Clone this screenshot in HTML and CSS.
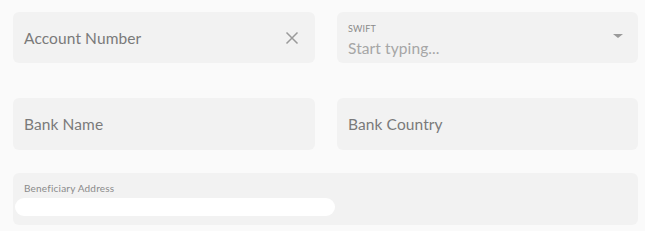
FILE: index.html
```html
<!DOCTYPE html>
<html>
<head>
<meta charset="utf-8">
<link rel="stylesheet" href="styles.css">
</head>
<body>
<div class="panel">
  <div class="row row-1">
    <div class="field">
      <span class="placeholder">Account Number</span>
      <svg class="clear" width="14" height="14" viewBox="0 0 14 14"><path d="M1.5 1.5L12.5 12.5M12.5 1.5L1.5 12.5" stroke="#9a9a9a" stroke-width="1.5" fill="none"/></svg>
    </div>
    <div class="field field-labelled">
      <div class="stack">
        <span class="label">SWIFT</span>
        <span class="placeholder light">Start typing...</span>
      </div>
      <span class="caret"></span>
    </div>
  </div>
  <div class="row row-2">
    <div class="field"><span class="placeholder">Bank Name</span></div>
    <div class="field"><span class="placeholder">Bank Country</span></div>
  </div>
  <div class="field field-wide">
    <span class="label small">Beneficiary Address</span>
    <div class="white-input"></div>
  </div>
</div>
</body>
</html>
```
FILE: styles.css
```css
html, body {
  margin: 0;
  padding: 0;
  background: #ffffff;
}
body {
  font-family: "Lato", "Noto Sans", sans-serif;
}
.panel {
  width: 645px;
  height: 231px;
  box-sizing: border-box;
  background: #fafafa;
  padding: 12px 7px 0 13px;
}
.row {
  display: grid;
  grid-template-columns: 302px 301px;
  column-gap: 22px;
}
.row-2 {
  margin-top: 35px;
}
.field {
  background: #f2f2f2;
  border-radius: 6px;
  height: 51px;
  box-sizing: border-box;
  padding: 0 11px;
  display: flex;
  align-items: center;
  justify-content: space-between;
}
.row-2 .field {
  height: 52px;
}
.placeholder {
  font-size: 15.5px;
  color: #7a7a7a;
  letter-spacing: 0.1px;
}
.placeholder.light {
  color: #a6a6a6;
}
.clear {
  margin-right: 5px;
}
.stack {
  display: flex;
  flex-direction: column;
  gap: 5px;
  margin-top: 4px;
}
.label {
  font-size: 9px;
  color: #8a8a8a;
  letter-spacing: 0.2px;
}
.caret {
  width: 0;
  height: 0;
  border-left: 5px solid transparent;
  border-right: 5px solid transparent;
  border-top: 4px solid #9a9a9a;
  margin-right: 4px;
  margin-bottom: 3px;
}
.field-wide {
  margin-top: 23px;
  height: 52px;
  flex-direction: column;
  align-items: flex-start;
  justify-content: flex-start;
  padding: 9px 0 0 2px;
}
.label.small {
  font-size: 10px;
  margin-left: 9px;
  letter-spacing: 0.2px;
}
.white-input {
  margin-top: 4px;
  width: 320px;
  height: 18px;
  background: #ffffff;
  border-radius: 9px;
}
```
